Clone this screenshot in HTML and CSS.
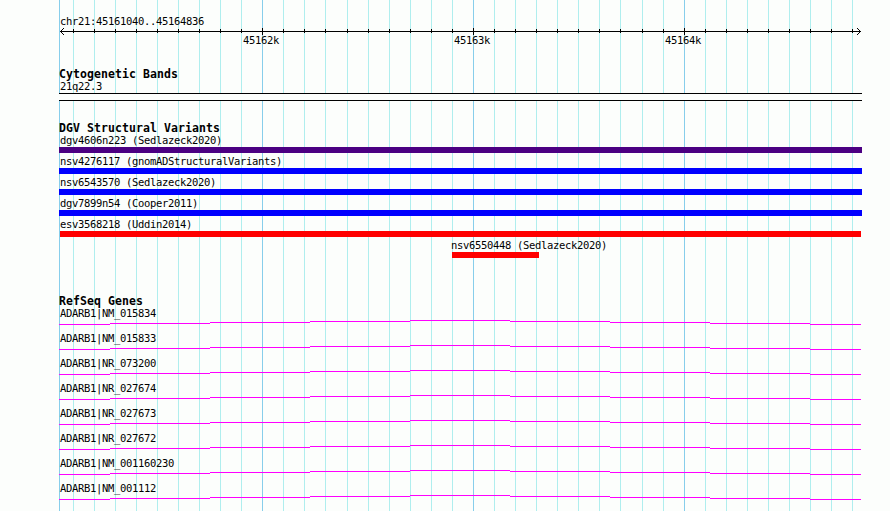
FILE: index.html
```html
<!DOCTYPE html>
<html lang="en">
<head>
<meta charset="utf-8">
<title>chr21:45161040..45164836</title>
<link rel="stylesheet" href="styles.css">
</head>
<body>
<svg class="grid" width="890" height="511" shape-rendering="crispEdges" aria-hidden="true">
<path class="minor" d="M73.5 0v511M94.5 0v511M115.5 0v511M136.5 0v511M157.5 0v511M178.5 0v511M199.5 0v511M220.5 0v511M241.5 0v511M283.5 0v511M304.5 0v511M325.5 0v511M347.5 0v511M368.5 0v511M389.5 0v511M410.5 0v511M431.5 0v511M452.5 0v511M494.5 0v511M515.5 0v511M536.5 0v511M557.5 0v511M578.5 0v511M599.5 0v511M620.5 0v511M642.5 0v511M663.5 0v511M705.5 0v511M726.5 0v511M747.5 0v511M768.5 0v511M789.5 0v511M810.5 0v511M831.5 0v511M852.5 0v511"/>
<path class="major" d="M59.5 0v511M262.5 0v511M473.5 0v511M684.5 0v511"/>
</svg>
<svg class="defs" width="0" height="0" aria-hidden="true">
<symbol id="intron" viewBox="0 0 803 5"><path class="gene-line" d="M0 4.5H51M51 3.5H151M151 2.5H251M251 1.5H351M351 .5H451M451 1.5H551M551 2.5H651M651 3.5H751M751 4.5H802"/></symbol>
</svg>
<main class="tracks">
<section class="ruler">
<p class="label">chr21:45161040..45164836</p>
<svg class="axis" width="803" height="7" shape-rendering="crispEdges" aria-hidden="true">
<path d="M1 3.5H802M14.5 1v4M35.5 1v4M56.5 1v4M77.5 1v4M98.5 1v4M119.5 1v4M140.5 1v4M161.5 1v4M182.5 1v4M224.5 1v4M245.5 1v4M266.5 1v4M288.5 1v4M309.5 1v4M330.5 1v4M351.5 1v4M372.5 1v4M393.5 1v4M435.5 1v4M456.5 1v4M477.5 1v4M498.5 1v4M519.5 1v4M540.5 1v4M561.5 1v4M583.5 1v4M604.5 1v4M646.5 1v4M667.5 1v4M688.5 1v4M709.5 1v4M730.5 1v4M751.5 1v4M772.5 1v4M793.5 1v4M203.5 0v7M414.5 0v7M625.5 0v7"/>
<path d="M4 .5h1M3 1.5h1M2 2.5h1M2 4.5h1M3 5.5h1M4 6.5h1M798 .5h1M799 1.5h1M800 2.5h1M800 4.5h1M799 5.5h1M798 6.5h1"/>
</svg>
<div class="scale"><span>45162k</span><span>45163k</span><span>45164k</span></div>
</section>
<section class="cytobands">
<h2>Cytogenetic Bands</h2>
<p class="label">21q22.3</p>
<div class="band"></div>
</section>
<section class="variants">
<h2>DGV Structural Variants</h2>
<div class="variant complex"><p class="label">dgv4606n223 (Sedlazeck2020)</p></div>
<div class="variant gain"><p class="label">nsv4276117 (gnomADStructuralVariants)</p></div>
<div class="variant gain"><p class="label">nsv6543570 (Sedlazeck2020)</p></div>
<div class="variant gain"><p class="label">dgv7899n54 (Cooper2011)</p></div>
<div class="variant loss clipped"><p class="label">esv3568218 (Uddin2014)</p></div>
<div class="variant loss partial"><p class="label">nsv6550448 (Sedlazeck2020)</p></div>
</section>
<section class="genes">
<h2>RefSeq Genes</h2>
<div class="gene"><p class="label">ADARB1|NM_015834</p><svg width="803" height="5" shape-rendering="crispEdges"><use href="#intron"/></svg></div>
<div class="gene"><p class="label">ADARB1|NM_015833</p><svg width="803" height="5" shape-rendering="crispEdges"><use href="#intron"/></svg></div>
<div class="gene"><p class="label">ADARB1|NR_073200</p><svg width="803" height="5" shape-rendering="crispEdges"><use href="#intron"/></svg></div>
<div class="gene"><p class="label">ADARB1|NR_027674</p><svg width="803" height="5" shape-rendering="crispEdges"><use href="#intron"/></svg></div>
<div class="gene"><p class="label">ADARB1|NR_027673</p><svg width="803" height="5" shape-rendering="crispEdges"><use href="#intron"/></svg></div>
<div class="gene"><p class="label">ADARB1|NR_027672</p><svg width="803" height="5" shape-rendering="crispEdges"><use href="#intron"/></svg></div>
<div class="gene"><p class="label">ADARB1|NM_001160230</p><svg width="803" height="5" shape-rendering="crispEdges"><use href="#intron"/></svg></div>
<div class="gene"><p class="label">ADARB1|NM_001112</p><svg width="803" height="5" shape-rendering="crispEdges"><use href="#intron"/></svg></div>
</section>
</main>
</body>
</html>
```
FILE: styles.css
```css
* { box-sizing: border-box; }
html, body { height: 511px; overflow: hidden; }
body {
  margin: 0;
  background: #fcfefc;
  color: #000;
  font: 10.5px/12px "DejaVu Sans Mono", monospace;
  letter-spacing: -0.321px;
}
svg { display: block; }
.grid { position: absolute; left: 0; top: 0; }
.defs { position: absolute; }
.minor { stroke: #afeeee; }
.major { stroke: #87ceeb; }
.tracks { position: relative; width: 803px; margin-left: 59px; padding-top: 15px; }
.label { margin: 0; padding-left: 1px; height: 13px; white-space: nowrap; }
h2 {
  margin: 0;
  height: 12px;
  font-size: 11.5px;
  line-height: 12px;
  font-weight: bold;
  letter-spacing: 0.077px;
  white-space: nowrap;
}
.ruler { height: 53px; }
.axis path { stroke: #000; fill: none; }
.scale { display: flex; gap: 175px; padding-left: 184px; margin-top: -1px; }
.scale span { width: 36px; white-space: nowrap; }
.cytobands { height: 54px; }
.band { height: 8px; border: solid #000; border-width: 1px 0; background: #fcfefc; }
.variants { height: 173px; }
.variant { height: 21px; }
.variant::after { content: ""; display: block; height: 6px; background: var(--color); }
.complex { --color: #4b0082; }
.gain { --color: #00f; }
.loss { --color: #f00; }
.clipped::after { margin: 0 1px; }
.partial { width: 87px; margin-left: 393px; }
.partial .label { padding-left: 0; margin-left: -1px; }
.gene { height: 25px; }
.gene-line { stroke: #f0f; }
```
